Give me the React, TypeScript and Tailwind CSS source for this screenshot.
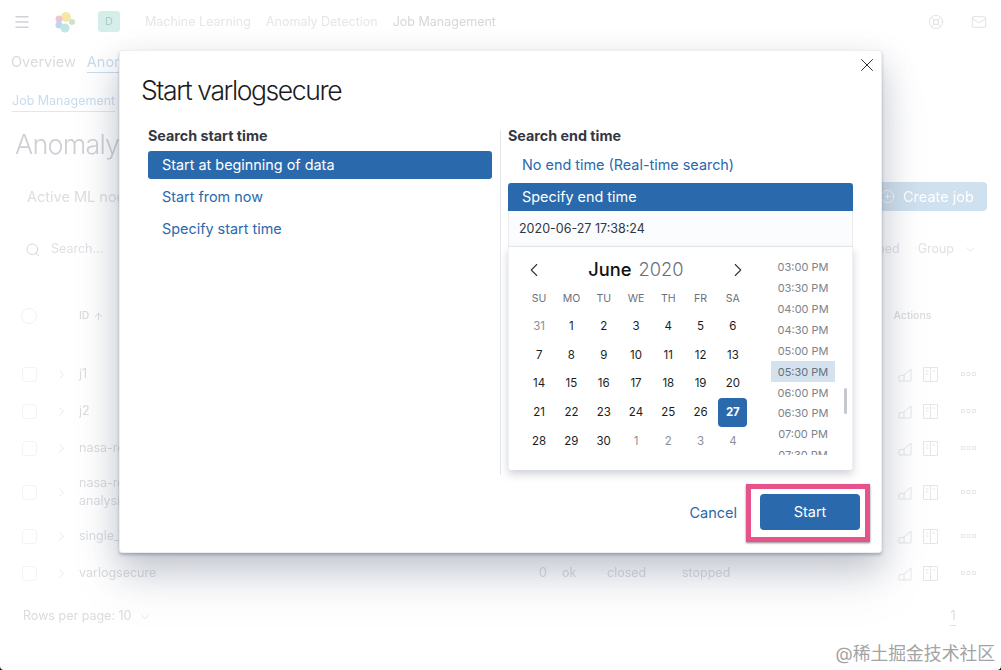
import React from "react";
import { ArrowUp, ChevronDown, ChevronLeft, ChevronRight, LifeBuoy, Mail, Menu, PlusCircle, Search, X } from "lucide-react";

const faint = "text-[#d9dbde]";

const jobs = [
  { id: "j1", h: "h-[37px]" },
  { id: "j2", h: "h-[37px]" },
  { id: "nasa-requests", h: "h-[37px]" },
  { id: "nasa-requests analysis", h: "h-[51px]" },
  { id: "single_metric", h: "h-[37px]" },
  { id: "varlogsecure", h: "h-[37px]", last: true },
];

const weeks = [
  ["31", "1", "2", "3", "4", "5", "6"],
  ["7", "8", "9", "10", "11", "12", "13"],
  ["14", "15", "16", "17", "18", "19", "20"],
  ["21", "22", "23", "24", "25", "26", "27"],
  ["28", "29", "30", "1", "2", "3", "4"],
];

const times = ["03:00 PM", "03:30 PM", "04:00 PM", "04:30 PM", "05:00 PM", "05:30 PM", "06:00 PM", "06:30 PM", "07:00 PM", "07:30 PM"];

const Logo = () => (
  <svg width="22" height="22" viewBox="0 0 22 22">
    <circle cx="12" cy="6" r="5" fill="#f6e6a8" />
    <circle cx="5" cy="8" r="3.5" fill="#eec4d8" />
    <circle cx="5" cy="14" r="3.5" fill="#bcd8ee" />
    <circle cx="11" cy="17" r="4.5" fill="#bfe6e0" />
    <circle cx="18" cy="11" r="3" fill="#c9e4c8" />
  </svg>
);

const RowActions = () => (
  <div className="flex items-center text-[#e4e6e8]">
    <svg width="15" height="15" viewBox="0 0 15 15" fill="none" stroke="currentColor">
      <path d="M1 14V9l5-1 7-6v12zM6 8v6" />
    </svg>
    <svg className="ml-[10px]" width="15" height="15" viewBox="0 0 15 15" fill="none" stroke="currentColor">
      <path d="M.5.5h14v14H.5zM7.5.5v14M3 4h2.5M3 7h2.5M9.5 4H12" />
    </svg>
    <svg className="ml-[23px]" width="15" height="5" viewBox="0 0 15 5" fill="none" stroke="currentColor">
      <path d="M.5.5h3v3h-3zM6 .5h3v3H6zM11.5.5h3v3h-3z" />
    </svg>
  </div>
);

const Background = () => (
  <div className={`flex flex-col blur-[0.6px] ${faint}`}>
    <header className="flex h-[43px] items-center pl-[13px] pr-[14px] text-[12.5px]">
      <Menu className="h-[18px] w-[18px] text-[#cfd2d6]" />
      <div className="ml-[23px]">
        <Logo />
      </div>
      <div className="ml-[22px] flex h-[21px] w-[22px] items-center justify-center rounded-[3px] bg-[#d6eeea] text-[11px] text-[#a9cfc8]">D</div>
      <span className="ml-[25px] mt-[1px] text-[#e4e6e8]">Machine Learning</span>
      <span className="ml-[15px] mt-[1px] text-[#e4e6e8]">Anomaly Detection</span>
      <span className="ml-[15px] mt-[1px] text-[#d4d6d9]">Job Management</span>
      <LifeBuoy className="ml-auto h-[16px] w-[16px] stroke-[1.2]" />
      <Mail className="ml-[27px] h-4 w-4 stroke-[1.2]" />
    </header>

    <div className="flex h-[38px] items-center pl-[11px] text-[14.5px]">
      <span>Overview</span>
      <span className="ml-[11px] border-b border-[#c9dcee] text-[#c9dcee]">Anomaly Detection</span>
    </div>

    <div className="flex h-[42px] items-center pl-[12px] text-[12.5px] text-[#c9dcee]">
      <span className="border-b border-[#dbe7f3]">Job Management</span>
    </div>

    <div className="flex h-[44px] items-center pl-[15px] text-[27px] font-light tracking-[-0.8px] text-[#cdd0d4]">Anomaly detection jobs</div>

    <div className="mt-[15px] flex h-[29px] items-center justify-between pl-[27px] pr-[14px] text-[14.5px]">
      <span className="text-[#dcdee1]">Active ML nodes</span>
      <div className="flex h-[29px] w-[170px] items-center gap-[8px] rounded-[4px] bg-[#cfe0ee] pl-[63px] text-white">
        <PlusCircle className="h-[15px] w-[15px] stroke-[1.2]" />
        <span>Create job</span>
      </div>
    </div>

    <div className="flex h-[77px] items-center pl-[25px] pr-[23px] text-[12.5px] text-[#dfe1e4]">
      <Search className="h-[16px] w-[16px] stroke-[1.5] text-[#d2d5d9]" />
      <span className="ml-[10px]">Search...</span>
      <span className="ml-auto">Grouped</span>
      <span className="ml-[18px]">Group</span>
      <ChevronDown className="ml-[9px] h-[15px] w-[15px] stroke-[1.2]" />
    </div>

    <div className="flex h-[56px] items-center pl-[21px] text-[10.5px] font-medium">
      <div className="h-4 w-4 rounded-full border border-[#f0f1f2]" />
      <span className="ml-[42px]">ID</span>
      <ArrowUp className="ml-[4px] h-[11px] w-[11px]" />
      <span className="ml-[789px]">Actions</span>
    </div>

    <div className="mt-[11.5px] flex flex-col text-[12.5px]">
      {jobs.map((job) => (
        <div key={job.id} className={`flex items-center pl-[22px] ${job.h}`}>
          <div className="h-[15px] w-[15px] shrink-0 rounded-[3px] border border-[#f2f3f4]" />
          <ChevronRight className="ml-[17px] h-[15px] w-[15px] shrink-0 stroke-[1.2] text-[#e0e2e5]" />
          <span className="ml-[10px] w-[460px] shrink-0 leading-[18px]">
            {job.id === "nasa-requests analysis" ? (
              <>
                nasa-requests
                <br />
                analysis
              </>
            ) : (
              job.id
            )}
          </span>
          {job.last ? (
            <div className="flex shrink-0">
              <span className="w-[23px]">0</span>
              <span className="w-[45px]">ok</span>
              <span className="w-[75px]">closed</span>
              <span className="w-[216px]">stopped</span>
            </div>
          ) : (
            <div className="w-[359px] shrink-0" />
          )}
          <RowActions />
        </div>
      ))}
    </div>

    <div className="flex h-[50px] items-center pl-[23px] text-[12.5px]">
      <span>Rows per page: 10</span>
      <ChevronDown className="ml-[7px] h-[14px] w-[14px] stroke-[1.2]" />
      <span className="ml-[798px] border-b border-[#dfe1e4]">1</span>
    </div>
  </div>
);

const Option = ({ label, active, square }: { label: string; active?: boolean; square?: boolean }) => (
  <div
    className={`flex h-[28px] items-center px-[14px] text-[14.4px] leading-[20px] ${
      active ? `bg-[#2a69ac] text-white ${square ? "rounded-t-[3px]" : "rounded-[3px]"}` : "text-[#2a69ac]"
    }`}
  >
    {label}
  </div>
);

const Calendar = () => (
  <div className="flex h-[223px] rounded-b-[3px] border-x border-[#eef0f3] bg-white shadow-[0_4px_8px_rgba(80,90,110,0.28)]">
    <div className="w-[249px] shrink-0 pl-[14px]">
      <div className="flex h-[40px] items-start justify-between pr-[9px] pt-[12px]">
        <ChevronLeft className="h-[22px] w-[22px] stroke-[1.2] text-[#343741]" />
        <div className="flex h-[22px] items-center gap-[7px] text-[18.3px]">
          <span className="font-medium text-[#111]">June</span>
          <span className="font-light text-[#69707d]">2020</span>
        </div>
        <ChevronRight className="h-[22px] w-[22px] stroke-[1.2] text-[#343741]" />
      </div>
      <div className="grid w-[226px] grid-cols-7">
        {["SU", "MO", "TU", "WE", "TH", "FR", "SA"].map((d) => (
          <div key={d} className="flex h-[24px] items-center justify-center text-[10.5px] text-[#69707d]">
            {d}
          </div>
        ))}
      </div>
      <div className="mt-[1px] grid w-[226px] grid-cols-7">
        {weeks.map((week, w) =>
          week.map((day, i) => {
            const muted = (w === 0 && i === 0) || (w === 4 && i > 2);
            const selected = day === "27";
            return (
              <div key={`${w}-${i}`} className="flex h-[28.75px] items-center justify-center">
                <span
                  className={`flex h-[29px] w-[29px] items-center justify-center rounded-[4px] text-[11.5px] ${
                    selected ? "bg-[#2a69ac] font-bold text-white" : muted ? "text-[#8a8f98]" : "text-[#1a1c21]"
                  }`}
                >
                  {day}
                </span>
              </div>
            );
          }),
        )}
      </div>
    </div>
    <div className="relative flex-1">
      <div className="ml-[13px] mt-[10px] h-[198px] w-[64px] overflow-hidden">
        {times.map((t) => (
          <div
            key={t}
            className={`flex h-[20.9px] items-center justify-center text-[11px] text-[#7d828b] ${
              t === "05:30 PM" ? "bg-[#d4e1ee] text-[#69707d]" : ""
            }`}
          >
            {t}
          </div>
        ))}
      </div>
      <div className="absolute left-[86px] top-[141px] h-[26px] w-[3px] rounded-full bg-[#c5c8cc]" />
    </div>
  </div>
);

export default function App() {
  return (
    <div className="h-[670px] w-full bg-black font-['Inter',sans-serif]">
      <div className="relative h-full w-full overflow-hidden rounded-b-[4px] bg-white">
        <Background />

        {/* Modal */}
        <div className="absolute left-[119px] top-[50px] flex h-[503px] w-[763px] flex-col rounded-[3px] border border-[#eceef1] bg-white shadow-[0_2px_3px_rgba(70,80,100,0.35),0_14px_34px_rgba(90,100,125,0.32),0_30px_50px_rgba(120,130,150,0.14)]">
          <X className="absolute right-[3px] top-[3px] h-[22px] w-[22px] stroke-[1] text-[#1a1c21]" />
          <h1 className="ml-[21px] mt-[21px] text-[26.5px] font-light leading-[36px] tracking-[-1.4px] text-[#1a1c21]">Start varlogsecure</h1>

          <div className="ml-[28px] mt-[20px] flex">
            <div className="w-[344px] shrink-0">
              <div className="mb-[7px] flex h-[16px] items-center text-[14.3px] font-bold leading-[16px] text-[#343741]">Search start time</div>
              <div className="flex flex-col gap-[4px]">
                <Option label="Start at beginning of data" active />
                <Option label="Start from now" />
                <Option label="Specify start time" />
              </div>
            </div>
            <div className="ml-[8px] mt-[2px] h-[345px] w-px shrink-0 bg-[#e4e6e9]" />
            <div className="ml-[7px] w-[345px] shrink-0">
              <div className="mb-[7px] flex h-[16px] items-center text-[14.3px] font-bold leading-[16px] text-[#343741]">Search end time</div>
              <div className="flex flex-col gap-[4px]">
                <Option label="No end time (Real-time search)" />
                <Option label="Specify end time" active square />
              </div>
              <div className="flex h-[36px] items-center border-x border-b border-[#e9ebee] bg-[#fbfcfd] pl-[10px] pt-[1px] text-[12.5px] text-[#343741]">
                2020-06-27 17:38:24
              </div>
              <Calendar />
            </div>
          </div>

          <div className="mr-[11px] mt-[9px] flex items-center justify-end">
            <span className="mr-[9px] text-[14.5px] text-[#2a69ac]">Cancel</span>
            <div className="flex h-[58px] w-[124px] items-start justify-end border-[5px] border-[#e6538a] bg-white pr-[5px] pt-[5px] shadow-[0_1px_2px_rgba(60,50,60,0.6)]">
              <div className="flex h-[36px] w-[100px] items-center justify-center rounded-[4px] bg-[#2a69ac] text-[14.5px] text-white">Start</div>
            </div>
          </div>
        </div>

        {/* Watermark */}
        <div className="absolute bottom-[4px] right-[6px] font-['Inter','Noto_Sans_CJK_SC',sans-serif] text-[17.8px] leading-[24px] text-[#a3a3a3]">
          @稀土掘金技术社区
        </div>
      </div>
    </div>
  );
}
